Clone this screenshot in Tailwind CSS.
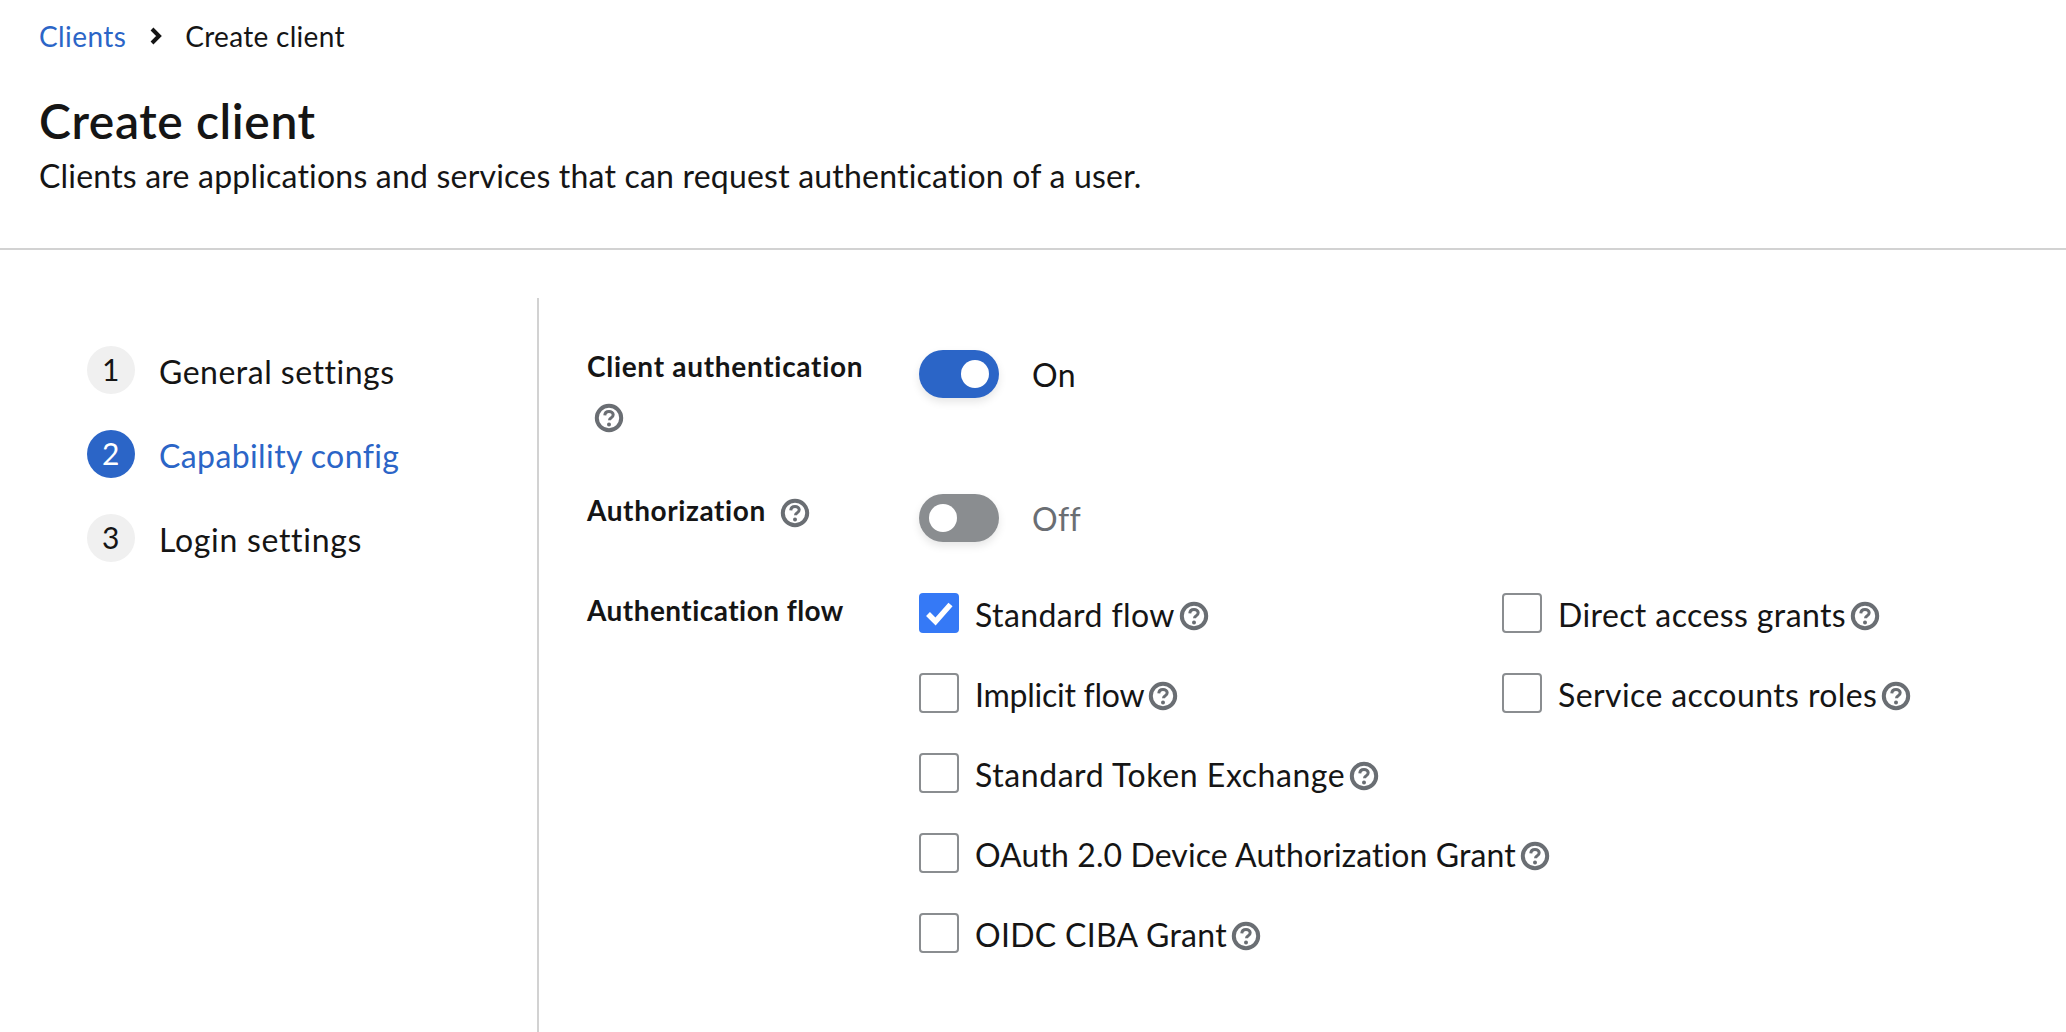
<!DOCTYPE html>
<html lang="en">
<head>
<meta charset="UTF-8">
<title>Create client</title>
<script src="https://cdn.jsdelivr.net/npm/@tailwindcss/browser@4"></script>
</head>
<body class="bg-white h-screen overflow-hidden font-['Lato',sans-serif] [font-variant-ligatures:none] text-[#151515] text-[32px] tracking-[0.4px]">
  <svg class="hidden">
    <symbol id="help" viewBox="0 0 30 30">
      <circle cx="15" cy="15" r="12.2" fill="none" stroke="#6a6e73" stroke-width="4"/>
      <path d="M10.8 12.4c.1-2.6 1.9-4 4.2-4 2.4 0 4.2 1.4 4.2 3.4 0 1.6-.9 2.4-2.2 3.2-1 .6-1.5 1.1-1.5 2.2" fill="none" stroke="#6a6e73" stroke-width="3"/>
      <circle cx="15" cy="21.4" r="2" fill="#6a6e73"/>
    </symbol>
  </svg>

  <header class="h-[250px] border-b-2 border-[#d2d2d2] pl-[39px] pt-[22px]">
    <nav class="flex items-center h-[28px] gap-[24px] text-[28px]">
      <a class="text-[#2b65c7]">Clients</a>
      <svg class="w-[14px] h-[20px] ml-[-1px]" viewBox="0 0 14 20"><path d="M3 3l7 7-7 7" fill="none" stroke="#151515" stroke-width="4"/></svg>
      <span class="ml-[-2px] tracking-[0.3px]">Create client</span>
    </nav>
    <h1 class="text-[48px] font-semibold leading-[56px] mt-[43px] tracking-[0.6px]">Create client</h1>
    <p class="leading-[40px] mt-[7px] tracking-[0.2px]">Clients are applications and services that can request authentication of a user.</p>
  </header>

  <main class="flex pt-[48px]">
    <ol class="w-[537px] pl-[87px] pt-[48px] flex flex-col gap-[36px] shrink-0">
      <li class="flex items-center gap-[24px] h-[48px]">
        <span class="w-[48px] h-[48px] rounded-full bg-[#f0f0f0] flex items-center justify-center text-[30px] pb-[2px]">1</span>
        <span class="mt-[3px] tracking-[0.5px]">General settings</span>
      </li>
      <li class="flex items-center gap-[24px] h-[48px] text-[#2b65c7]">
        <span class="w-[48px] h-[48px] rounded-full bg-[#2b65c7] text-white flex items-center justify-center text-[30px] pb-[2px]">2</span>
        <span class="mt-[3px]">Capability config</span>
      </li>
      <li class="flex items-center gap-[24px] h-[48px]">
        <span class="w-[48px] h-[48px] rounded-full bg-[#f0f0f0] flex items-center justify-center text-[30px] pb-[2px]">3</span>
        <span class="mt-[3px] tracking-[0.7px]">Login settings</span>
      </li>
    </ol>

    <section class="border-l-2 border-[#d2d2d2] flex-1 h-[734px] pl-[48px] pt-[52px] flex flex-col">
      <div class="flex h-[144px]">
        <div class="w-[332px]">
          <div class="font-bold text-[28px] leading-[32px] tracking-[0.7px]">Client authentication</div>
          <svg class="w-[30px] h-[30px] mt-[21px] ml-[7px]"><use href="#help"/></svg>
        </div>
        <div class="flex items-start gap-[33px]">
          <span class="w-[80px] h-[48px] rounded-full bg-[#2b65c7] flex items-center justify-end pr-[10px] shadow-[0_4px_8px_rgba(0,0,0,0.1)]"><span class="w-[28px] h-[28px] rounded-full bg-white"></span></span>
          <span class="leading-[48px] mt-[1px]">On</span>
        </div>
      </div>
      <div class="flex h-[99px]">
        <div class="w-[332px] flex items-start gap-[14px]">
          <div class="font-bold text-[28px] leading-[32px] tracking-[0.6px]">Authorization</div>
          <svg class="w-[30px] h-[30px] mt-[4px]"><use href="#help"/></svg>
        </div>
        <div class="flex items-start gap-[33px]">
          <span class="w-[80px] h-[48px] rounded-full bg-[#8a8d90] flex items-center pl-[10px] shadow-[0_4px_8px_rgba(0,0,0,0.1)]"><span class="w-[28px] h-[28px] rounded-full bg-white"></span></span>
          <span class="leading-[48px] mt-[1px] text-[#6a6e73]">Off</span>
        </div>
      </div>
      <div class="flex">
        <div class="w-[332px] font-bold text-[28px] leading-[32px] pt-[1px] tracking-[0.45px]">Authentication flow</div>
        <div class="grid grid-cols-[583px_1fr] auto-rows-[80px]">
          <label class="flex items-start gap-[16px]">
            <span class="w-[40px] h-[40px] rounded-[4px] bg-[#3579f6]"><svg class="w-[40px] h-[40px]" viewBox="0 0 40 40"><path d="M9 21l7.5 7.5L31.5 11.5" fill="none" stroke="white" stroke-width="5.5"/></svg></span>
            <span class="flex items-center gap-[4px] h-[44px]">Standard flow<svg class="w-[30px] h-[30px] mt-[2px]"><use href="#help"/></svg></span>
          </label>
          <label class="flex items-start gap-[16px]">
            <span class="w-[40px] h-[40px] rounded-[4px] border-2 border-[#8a8d90]"></span>
            <span class="flex items-center gap-[4px] h-[44px]">Direct access grants<svg class="w-[30px] h-[30px] mt-[2px]"><use href="#help"/></svg></span>
          </label>
          <label class="flex items-start gap-[16px]">
            <span class="w-[40px] h-[40px] rounded-[4px] border-2 border-[#8a8d90]"></span>
            <span class="flex items-center gap-[4px] h-[44px] tracking-[-0.25px]">Implicit flow<svg class="w-[30px] h-[30px] mt-[2px]"><use href="#help"/></svg></span>
          </label>
          <label class="flex items-start gap-[16px]">
            <span class="w-[40px] h-[40px] rounded-[4px] border-2 border-[#8a8d90]"></span>
            <span class="flex items-center gap-[4px] h-[44px]">Service accounts roles<svg class="w-[30px] h-[30px] mt-[2px]"><use href="#help"/></svg></span>
          </label>
          <label class="flex items-start gap-[16px] col-span-2">
            <span class="w-[40px] h-[40px] rounded-[4px] border-2 border-[#8a8d90]"></span>
            <span class="flex items-center gap-[4px] h-[44px] tracking-[0.57px]">Standard Token Exchange<svg class="w-[30px] h-[30px] mt-[2px]"><use href="#help"/></svg></span>
          </label>
          <label class="flex items-start gap-[16px] col-span-2">
            <span class="w-[40px] h-[40px] rounded-[4px] border-2 border-[#8a8d90]"></span>
            <span class="flex items-center gap-[4px] h-[44px] tracking-[0.1px]">OAuth 2.0 Device Authorization Grant<svg class="w-[30px] h-[30px] mt-[2px]"><use href="#help"/></svg></span>
          </label>
          <label class="flex items-start gap-[16px] col-span-2">
            <span class="w-[40px] h-[40px] rounded-[4px] border-2 border-[#8a8d90]"></span>
            <span class="flex items-center gap-[4px] h-[44px] tracking-[0.3px]">OIDC CIBA Grant<svg class="w-[30px] h-[30px] mt-[2px]"><use href="#help"/></svg></span>
          </label>
        </div>
      </div>
    </section>
  </main>
</body>
</html>
